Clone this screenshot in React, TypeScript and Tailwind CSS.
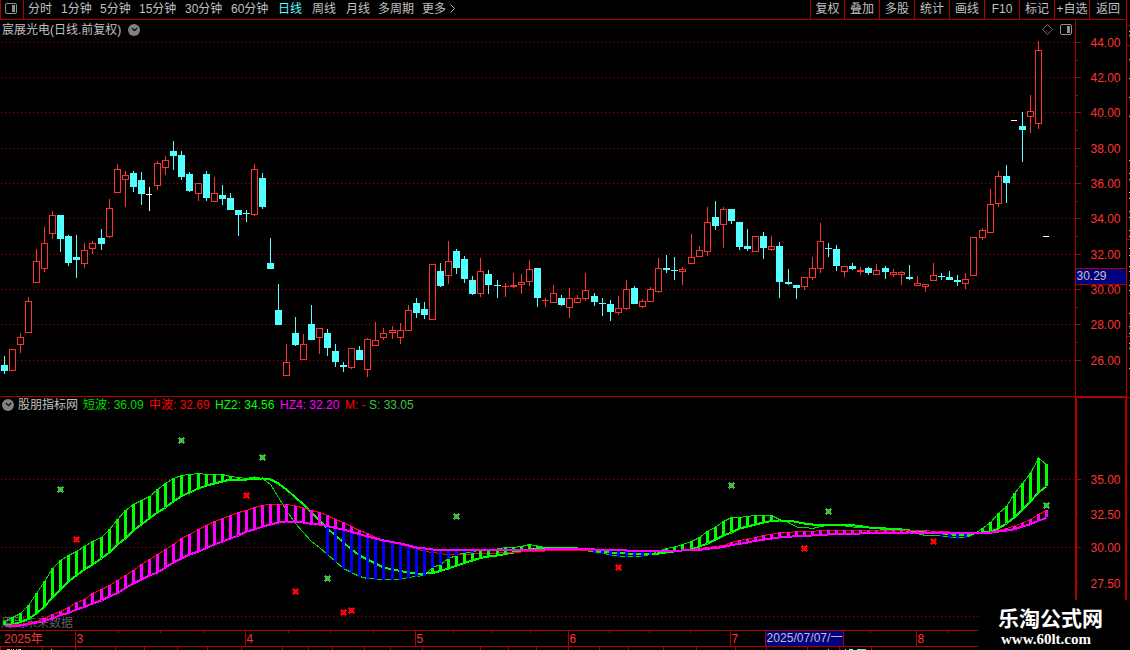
import { ChevronDown } from "lucide-react";

// x, high, body top, body bottom, low, kind (r = up, c = down, w = flat)
type Candle = [number, number, number, number, number, string];

const candles: Candle[] = [
  [4, 356, 365, 371, 374, "c"], [12, 349, 349, 371, 371, "r"], [20, 333, 337, 345, 353, "r"],
  [28, 297, 301, 333, 333, "r"], [36, 249, 261, 283, 283, "r"], [44, 227, 243, 269, 272, "r"],
  [52, 211, 215, 234, 239, "r"], [60, 215, 215, 239, 252, "c"], [68, 235, 236, 263, 266, "c"],
  [76, 235, 257, 260, 278, "c"], [84, 243, 250, 264, 268, "r"], [92, 241, 243, 249, 254, "r"],
  [101, 229, 238, 244, 250, "c"], [109, 199, 208, 237, 238, "r"], [117, 164, 169, 193, 193, "r"],
  [125, 171, 175, 180, 207, "r"], [133, 171, 173, 187, 192, "c"], [141, 172, 180, 194, 205, "c"],
  [149, 187, 194, 195, 211, "w"], [157, 161, 163, 186, 190, "r"], [165, 156, 160, 168, 175, "r"],
  [173, 141, 151, 156, 170, "c"], [181, 151, 155, 177, 180, "c"], [189, 172, 174, 191, 192, "c"],
  [198, 183, 183, 194, 201, "r"], [206, 171, 174, 198, 201, "c"], [214, 177, 193, 202, 202, "r"],
  [222, 185, 195, 199, 205, "c"], [230, 193, 198, 210, 210, "c"], [238, 210, 210, 215, 236, "c"],
  [246, 210, 213, 214, 222, "c"], [254, 164, 169, 215, 216, "r"], [262, 173, 178, 207, 209, "c"],
  [270, 238, 263, 269, 269, "c"], [278, 284, 310, 325, 325, "c"], [286, 344, 362, 376, 376, "r"],
  [295, 317, 333, 345, 346, "c"], [303, 334, 344, 360, 360, "r"], [311, 305, 324, 340, 340, "c"],
  [319, 328, 328, 338, 354, "r"], [327, 329, 333, 348, 356, "c"], [335, 344, 351, 362, 367, "c"],
  [343, 362, 365, 367, 372, "c"], [351, 348, 348, 368, 369, "r"], [359, 346, 350, 360, 360, "c"],
  [367, 338, 339, 370, 377, "r"], [375, 322, 340, 346, 346, "r"], [383, 328, 333, 338, 340, "r"],
  [392, 326, 330, 333, 339, "r"], [400, 323, 330, 338, 344, "r"], [408, 305, 310, 331, 331, "r"],
  [416, 298, 303, 313, 318, "c"], [424, 302, 309, 315, 319, "c"], [432, 264, 264, 320, 320, "r"],
  [440, 263, 271, 286, 287, "c"], [448, 241, 261, 276, 284, "r"], [456, 249, 251, 268, 274, "c"],
  [464, 256, 259, 279, 283, "c"], [472, 276, 280, 294, 295, "c"], [480, 258, 271, 294, 297, "r"],
  [488, 270, 274, 285, 294, "c"], [497, 280, 285, 286, 298, "c"], [505, 283, 286, 287, 297, "r"],
  [513, 273, 285, 287, 288, "r"], [521, 274, 282, 285, 294, "r"], [529, 260, 269, 282, 286, "r"],
  [537, 268, 268, 298, 307, "c"], [545, 298, 300, 301, 307, "r"], [553, 285, 293, 303, 303, "r"],
  [561, 295, 298, 305, 306, "c"], [569, 288, 298, 308, 318, "r"], [577, 295, 298, 303, 303, "r"],
  [585, 273, 290, 299, 301, "r"], [594, 293, 296, 302, 306, "c"], [602, 298, 303, 304, 316, "c"],
  [610, 300, 304, 312, 321, "c"], [618, 296, 308, 313, 315, "r"], [626, 280, 289, 309, 310, "r"],
  [634, 286, 288, 304, 304, "c"], [642, 299, 301, 307, 308, "r"], [650, 287, 289, 302, 302, "r"],
  [658, 258, 268, 292, 293, "r"], [666, 255, 268, 270, 273, "c"], [674, 257, 270, 271, 280, "c"],
  [682, 267, 269, 272, 285, "r"], [691, 234, 257, 264, 264, "r"], [699, 246, 250, 257, 257, "r"],
  [707, 207, 222, 252, 256, "r"], [715, 201, 217, 226, 230, "c"], [723, 207, 209, 225, 248, "r"],
  [731, 209, 209, 221, 224, "c"], [739, 222, 222, 247, 250, "c"], [747, 229, 246, 249, 251, "c"],
  [755, 236, 236, 252, 252, "r"], [763, 232, 236, 248, 259, "c"], [771, 236, 246, 250, 251, "r"],
  [779, 242, 246, 282, 298, "c"], [788, 269, 282, 284, 285, "c"], [796, 285, 285, 288, 299, "c"],
  [804, 277, 277, 287, 290, "r"], [812, 257, 268, 278, 280, "r"], [820, 223, 241, 269, 273, "r"],
  [828, 243, 248, 249, 257, "c"], [836, 245, 249, 266, 271, "c"], [844, 266, 266, 272, 277, "r"],
  [852, 263, 266, 269, 270, "c"], [860, 267, 270, 272, 275, "r"], [868, 267, 268, 273, 275, "c"],
  [876, 264, 270, 275, 275, "r"], [885, 266, 268, 272, 279, "c"], [893, 269, 272, 275, 277, "r"],
  [901, 271, 272, 275, 285, "r"], [909, 265, 277, 279, 280, "c"], [917, 276, 283, 286, 286, "r"],
  [925, 284, 284, 287, 292, "r"], [933, 263, 275, 281, 281, "r"], [941, 273, 276, 277, 280, "c"],
  [949, 271, 277, 280, 280, "c"], [957, 275, 280, 282, 286, "c"], [965, 273, 279, 284, 289, "r"],
  [973, 237, 237, 276, 276, "r"], [982, 228, 230, 238, 240, "r"], [990, 189, 204, 233, 233, "r"],
  [998, 171, 176, 204, 207, "r"], [1006, 165, 176, 183, 203, "c"], [1014, 120, 120, 121, 121, "w"],
  [1022, 112, 126, 130, 162, "c"], [1030, 95, 111, 117, 133, "r"], [1038, 41, 50, 124, 129, "r"],
  [1046, 236, 236, 237, 237, "w"],
];

type Point = [number, number];

const shortWave: Point[] = [
  [4, 621], [12, 617], [20, 613], [28, 605], [36, 593], [44, 581], [52, 568], [60, 560], [68, 555],
  [76, 551], [84, 546], [92, 541], [101, 537], [109, 529], [117, 519], [125, 510], [133, 504],
  [141, 500], [149, 496], [157, 489], [165, 483], [173, 478], [181, 475], [189, 474], [198, 473],
  [206, 474], [222, 474], [230, 476], [238, 477], [246, 478], [254, 476.5], [262, 478], [270, 484],
  [278, 497], [286, 510], [295, 523], [303, 532], [311, 541], [319, 547], [327, 554], [335, 561],
  [343, 568], [351, 572], [359, 576], [367, 578], [375, 578.5], [400, 578.5], [408, 577], [416, 576],
  [424, 575], [432, 567], [440, 564], [448, 558], [456, 555], [464, 552], [472, 551.5], [480, 549],
  [488, 548.5], [497, 548.5], [505, 547], [513, 547], [521, 546], [529, 544], [537, 545.5],
  [545, 547], [561, 547.5], [577, 548], [585, 550], [594, 551.5], [602, 552.5], [610, 554.5],
  [618, 555.5], [642, 555.5], [650, 554], [658, 550.5], [666, 548], [674, 546.5], [682, 544],
  [691, 541], [699, 537], [707, 531], [715, 526.5], [723, 521], [731, 517], [739, 517], [747, 516],
  [755, 515], [771, 515], [779, 519], [788, 522], [796, 526.5], [804, 527], [812, 528], [820, 526],
  [828, 525], [836, 525], [844, 525.5], [852, 526.5], [868, 527.5], [885, 529], [901, 530],
  [909, 531], [917, 533], [925, 535], [941, 535.5], [949, 536.5], [957, 537.5], [965, 537],
  [973, 534], [982, 528], [990, 522], [998, 513], [1006, 506], [1014, 493], [1022, 483],
  [1030, 473], [1038, 457.5], [1046, 464],
];

const hz2: Point[] = [
  [4, 625], [12, 624], [20, 621.5], [28, 618.5], [36, 613], [44, 606], [52, 597], [60, 589],
  [68, 581], [76, 575], [84, 569], [92, 564], [101, 558], [109, 552], [117, 544], [125, 538],
  [133, 530], [141, 524], [149, 518], [157, 512], [165, 507], [173, 501], [181, 495.5], [189, 492],
  [198, 488], [206, 485], [214, 483], [222, 481], [230, 479], [246, 479], [254, 478.5], [262, 478],
  [270, 479], [278, 483], [286, 489], [295, 497], [303, 504], [311, 512], [319, 520], [327, 528],
  [335, 535], [343, 542], [351, 549], [359, 555], [367, 559], [375, 563], [383, 567], [392, 569],
  [400, 570.5], [408, 572], [416, 573], [424, 573], [432, 572.5], [440, 570.5], [448, 568],
  [456, 565], [464, 562.5], [472, 560], [480, 557.5], [488, 556], [497, 555], [505, 553.5],
  [513, 552], [521, 550], [529, 549], [537, 548], [569, 547.5], [577, 548], [585, 549], [594, 550.5],
  [602, 551], [610, 552], [618, 552.5], [626, 553], [658, 553], [666, 552], [674, 551], [682, 550],
  [691, 549], [699, 546], [707, 543], [715, 539], [723, 535], [731, 532], [739, 528], [747, 526],
  [755, 524], [763, 522], [771, 520.5], [779, 520], [788, 520], [796, 521.5], [804, 523],
  [812, 524], [844, 524], [860, 525.5], [868, 527], [885, 528], [901, 529], [909, 530],
  [917, 531.5], [933, 532.4], [941, 533], [949, 533.7], [957, 534.7], [965, 535], [973, 533],
  [982, 532], [990, 531], [998, 528], [1006, 523], [1014, 517], [1022, 509], [1030, 501],
  [1038, 492], [1046, 486],
];

const midWave: Point[] = [
  [4, 625], [20, 624], [36, 621], [44, 618], [52, 614], [60, 611], [68, 607], [76, 602], [84, 599],
  [92, 593], [101, 589], [109, 585], [117, 580], [125, 575], [133, 570], [141, 564], [149, 559],
  [157, 554], [165, 549], [173, 544], [181, 538], [189, 534], [198, 529], [206, 525], [214, 521],
  [222, 518], [230, 515], [238, 512], [246, 510], [254, 507], [262, 505], [270, 503.5], [278, 503.5],
  [286, 504], [295, 505.5], [303, 507.5], [311, 510], [319, 512], [327, 515], [335, 519],
  [343, 522], [351, 526], [359, 530], [367, 533], [375, 537], [383, 540], [392, 542], [400, 544],
  [408, 546], [416, 548.5], [424, 551], [432, 552], [440, 553], [448, 554.4], [464, 554.4],
  [480, 552.7], [497, 552.5], [513, 552], [529, 551], [545, 550.5], [577, 550], [618, 550],
  [642, 551], [666, 551], [682, 549.7], [691, 549], [699, 548], [707, 547], [715, 546], [723, 545],
  [731, 542], [739, 540], [747, 538.5], [755, 537], [763, 535], [771, 533.7], [779, 532.3],
  [796, 531.3], [820, 530.3], [836, 529.5], [893, 529.5], [909, 529.7], [925, 530.3], [941, 531],
  [957, 532], [973, 532.3], [990, 531.5], [998, 530], [1006, 528], [1014, 525.5], [1022, 522.5],
  [1030, 519], [1038, 514], [1046, 510],
];

const hz4: Point[] = [
  [4, 625], [20, 625], [36, 622], [44, 620.5], [52, 618], [60, 614.5], [68, 612.5], [76, 609],
  [84, 606.5], [92, 603], [101, 600], [109, 596], [117, 592.5], [125, 587.5], [133, 583],
  [141, 579], [149, 575], [157, 572], [165, 567], [173, 562], [181, 558], [189, 554], [198, 551],
  [206, 547.5], [214, 544], [222, 541], [230, 538], [238, 535], [246, 531], [254, 529], [262, 526],
  [270, 524], [278, 522], [286, 521], [295, 521.3], [303, 522], [311, 523.5], [319, 524],
  [327, 525.5], [335, 527.5], [343, 529], [351, 531.5], [359, 533.5], [367, 536], [375, 538],
  [383, 540], [392, 541.5], [400, 543], [408, 545], [416, 547], [424, 548], [432, 549],
  [440, 549.7], [505, 549.7], [545, 549], [577, 548.7], [594, 549], [610, 549.7], [642, 550.3],
  [666, 550.5], [682, 550], [699, 549.3], [707, 548.3], [715, 547.5], [723, 546.5], [731, 544.5],
  [739, 543.5], [747, 542], [755, 540.3], [763, 539.3], [771, 538], [779, 537], [796, 535.7],
  [812, 535], [828, 534], [844, 533.3], [860, 533], [893, 532.7], [909, 532], [941, 532],
  [957, 533], [990, 532.3], [998, 531], [1006, 530], [1014, 528.7], [1022, 526], [1030, 523.7],
  [1038, 520.3], [1046, 517.3],
];

const buyMarks: Point[] = [[60, 489], [181, 440], [262, 457], [327, 578], [456, 516], [731, 485], [828, 511], [1046, 505]];
const sellMarks: Point[] = [[76, 539], [246, 495], [295, 591], [343, 612], [351, 610], [618, 567], [804, 548], [933, 541]];

const priceTicks: [string, number][] = [
  ["44.00", 42], ["42.00", 77], ["40.00", 112], ["38.00", 148], ["36.00", 183],
  ["34.00", 218], ["32.00", 254], ["30.00", 289], ["28.00", 324], ["26.00", 360],
];
const minorTicks = [60, 95, 130, 166, 201, 236, 271, 307, 342];

const periods = [
  { label: "分时", width: "w-[33px]" },
  { label: "1分钟", width: "w-[39px]" },
  { label: "5分钟", width: "w-[39px]" },
  { label: "15分钟", width: "w-[46px]" },
  { label: "30分钟", width: "w-[46px]" },
  { label: "60分钟", width: "w-[47px]" },
  { label: "日线", width: "w-[34px]", active: true },
  { label: "周线", width: "w-[34px]" },
  { label: "月线", width: "w-[32px]" },
  { label: "多周期", width: "w-[44px]" },
  { label: "更多", width: "w-[26px]" },
];

const actions = [
  { label: "复权", width: "w-[34px]" },
  { label: "叠加", width: "w-[35px]" },
  { label: "多股", width: "w-[35px]" },
  { label: "统计", width: "w-[35px]" },
  { label: "画线", width: "w-[35px]" },
  { label: "F10", width: "w-[35px]" },
  { label: "标记", width: "w-[35px]" },
  { label: "+自选", width: "w-[35px]" },
  { label: "返回", width: "w-[37px]" },
];

const months: [string, number][] = [["3", 75], ["4", 245], ["5", 415], ["6", 568], ["7", 730], ["8", 916]];
const weekTicks = [118, 160, 203, 288, 330, 373, 453, 492, 530, 609, 649, 690, 870, 948];
const tabTicks = [0, 42, 75, 115, 144, 177, 207, 241, 282, 308, 332, 364, 390, 422, 480, 508, 536, 568, 599, 628, 663, 696, 735, 766, 807, 839, 871];
const stripDots = [31, 35, 59, 78, 97, 116, 160, 173, 179, 192, 198, 211, 217, 230, 236, 248, 255, 266, 271, 285, 290, 313, 326, 333, 343, 348, 368];

const RED = "#b00000";

const valueAt = (line: Point[], x: number) => {
  const i = line.findIndex((p) => p[0] >= x);
  if (i <= 0) return line[0][1];
  const [x0, y0] = line[i - 1];
  const [x1, y1] = line[i];
  return y0 + ((y1 - y0) * (x - x0)) / (x1 - x0);
};

const toPoints = (line: Point[]) => line.map(([x, y]) => `${x + 0.5},${y + 0.5}`).join(" ");

const GridLine = ({ y, end = 1075 }: { y: number; end?: number }) => (
  <line x1="1" x2={end} y1={y + 0.5} y2={y + 0.5} stroke="#b00000" strokeDasharray="1 3" />
);

const CandleShape = ({ candle }: { candle: Candle }) => {
  const [x, high, top, bottom, low, kind] = candle;
  if (kind === "r") {
    return (
      <g fill="#ff3232">
        <rect x={x} y={high} width="1" height={top - high} />
        <rect x={x} y={bottom} width="1" height={low - bottom} />
        {bottom - top < 3 ? (
          <rect x={x - 3} y={top} width="7" height={bottom - top} />
        ) : (
          <rect x={x - 2.5} y={top + 0.5} width="6" height={bottom - top - 1} fill="black" stroke="#ff3232" />
        )}
      </g>
    );
  }
  return (
    <g fill={kind === "c" ? "#54ffff" : "#ffffff"}>
      <rect x={x} y={high} width="1" height={low - high} />
      <rect x={x - 3} y={top} width={kind === "c" ? 7 : 6} height={bottom - top} />
    </g>
  );
};

const Mark = ({ at, color }: { at: Point; color: string }) => (
  <path
    transform={`translate(${at[0] - 3} ${at[1] - 3})`}
    fill={color}
    d="M1 0h1v1h3V0h1v1h1v1H6v3h1v1H6v1H5V6H2v1H1V6H0V5h1V2H0V1h1z"
  />
);

const RoundChevron = () => (
  <span className="flex h-3 w-3 items-center justify-center rounded-full bg-[#808080]">
    <ChevronDown size={9} strokeWidth={3.5} color="black" />
  </span>
);

const PanelIcon = () => (
  <svg width="12" height="11" viewBox="0 0 12 11" className="shrink-0">
    <rect x="0.5" y="0.5" width="11" height="10" rx="1.5" fill="none" stroke="#909090" />
    <rect x="7" y="2" width="3" height="7" fill="#909090" />
  </svg>
);

const PriceChart = () => (
  <svg
    width="1126"
    height="357"
    viewBox="0 39 1126 357"
    shapeRendering="crispEdges"
    fontSize="12"
    className="block overflow-visible"
  >
    {priceTicks.map(([label, y]) => (
      <g key={label}>
        <GridLine y={y} />
        <rect x="1076" y={y} width="5" height="1" fill={RED} />
        <text x="1090.5" y={y + 5} fill="#ff3232">{label}</text>
      </g>
    ))}
    {minorTicks.map((y) => (
      <rect key={y} x="1076" y={y} width="2" height="1" fill={RED} />
    ))}
    <rect x="1075" y="39" width="1" height="357" fill={RED} />
    {candles.map((c) => (
      <CandleShape key={c[0]} candle={c} />
    ))}
    {/* Cursor price */}
    <rect x="1076" y="268" width="50" height="17" fill={RED} />
    <rect x="1076" y="269" width="50" height="15" fill="#000080" />
    <text x="1076.5" y="280" fill="#c0c0c0">30.29</text>
  </svg>
);

const IndicatorChart = () => (
  <svg
    width="1127"
    height="216"
    viewBox="0 414 1127 216"
    shapeRendering="crispEdges"
    fontSize="12"
    className="block"
  >
    <GridLine y={479} />
    <GridLine y={547} />
    <GridLine y={616} end={978} />
    <text x="1" y="627" fill="#606060">用到未来数据</text>
    <rect x="1075" y="414" width="2" height="186" fill={RED} />
    <rect x="1125" y="414" width="2" height="186" fill={RED} />
    {[479, 547].map((y) => (
      <rect key={y} x="1077" y={y} width="4" height="1" fill={RED} />
    ))}
    {[513, 582].map((y) => (
      <rect key={y} x="1077" y={y} width="1" height="1" fill={RED} />
    ))}
    <g fill="#ff3232">
      <text x="1090.5" y="484">35.00</text>
      <text x="1090.5" y="519">32.50</text>
      <text x="1090.5" y="552">30.00</text>
      <text x="1090.5" y="588">27.50</text>
    </g>
    <polyline points={toPoints(shortWave)} fill="none" stroke="#00e000" />
    <polyline points={toPoints(hz2)} fill="none" stroke="#00ff00" strokeWidth="2" />
    <polyline points={toPoints(midWave)} fill="none" stroke="#ff0000" />
    {candles.map(([x]) => {
      const s = valueAt(shortWave, x);
      const h2 = valueAt(hz2, x);
      const m = valueAt(midWave, x);
      const h4 = valueAt(hz4, x);
      return (
        <g key={x}>
          {s < h2 - 0.5 && <rect x={x - 1} y={s} width="3" height={h2 - s} fill="#00ff00" />}
          {m < h4 - 0.5 && <rect x={x - 1} y={m} width="3" height={h4 - m} fill="#ff00ff" />}
          {h2 > h4 + 0.5 && s > h4 + 0.5 && (
            <rect x={x - 1} y={h4} width="3" height={s - h4 + 1} fill="#0000ff" />
          )}
        </g>
      );
    })}
    <polyline points={toPoints(hz4)} fill="none" stroke="#ff00ff" strokeWidth="2" />
    {buyMarks.map((p) => (
      <Mark key={p[0]} at={p} color="#40c040" />
    ))}
    {sellMarks.map((p) => (
      <Mark key={p[0]} at={p} color="#ff0000" />
    ))}
  </svg>
);

const TimeAxis = () => (
  <svg
    width="978"
    height="20"
    viewBox="0 630 978 20"
    shapeRendering="crispEdges"
    fontSize="12"
    className="block"
  >
    <g fill={RED}>
      <rect x="0" y="630" width="978" height="1" />
      <rect x="0" y="646" width="978" height="1" />
      {months.map(([label, x]) => (
        <rect key={label} x={x} y="630" width="1" height="16" />
      ))}
      {weekTicks.map((x) => (
        <rect key={x} x={x} y="631" width="1" height="2" />
      ))}
      {tabTicks.map((x) => (
        <rect key={x} x={x} y="647" width="1" height="3" />
      ))}
      <rect x="765" y="630" width="79" height="17" />
    </g>
    <rect x="766" y="631" width="77" height="15" fill="#000080" />
    <g fill="#ff3232">
      <text x="4" y="643">2025年</text>
      {months.map(([label, x]) => (
        <text key={label} x={x + 1.5} y="643">{label}</text>
      ))}
    </g>
    <text x="766.5" y="642" fill="#c0c0c0" textLength="76">2025/07/07/一</text>
    {/* Tops of the status row */}
    <path d="M7 649.5h3M11 649.5h1M13 649.5h1M16 649.5h1M18 649.5h3M51 649.5h1M828 649.5h1" stroke="#c0c0c0" />
    <path d="M845 649.5h1M849 649.5h4M857 649.5h9" stroke="#54ffff" />
  </svg>
);

export default function App() {
  return (
    <div className="relative flex h-[650px] w-[1130px] overflow-hidden bg-black font-['Liberation_Sans','Noto_Sans_CJK_SC',sans-serif] text-[12px] text-[#c0c0c0]">
      <div className="flex w-[1127px] flex-col">
        {/* Toolbar */}
        <div className="flex h-5 border-r border-b border-l border-[#b00000] leading-[19px]">
          <div className="flex w-[23px] items-center border-r border-[#b00000] pb-[2px] pl-1">
            <PanelIcon />
          </div>
          <div className="flex flex-1 pl-1">
            {periods.map((p) => (
              <span key={p.label} className={`${p.width} whitespace-nowrap ${p.active ? "text-[#54ffff]" : ""}`}>
                {p.label}
              </span>
            ))}
            <svg width="8" height="18" viewBox="0 0 8 18" fill="none" stroke="#c0c0c0">
              <path d="M2.5 4.5l4 4-4 4" />
            </svg>
          </div>
          {actions.map((a) => (
            <span key={a.label} className={`${a.width} h-[19px] shrink-0 border-l border-[#b00000] text-center whitespace-nowrap`}>
              {a.label}
            </span>
          ))}
        </div>

        {/* Price pane */}
        <div className="border-r border-[#b00000]">
          <div className="flex h-[19px]">
            <div className="flex flex-1 items-center gap-[7px] pl-[2px]">
              <span>宸展光电(日线.前复权)</span>
              <RoundChevron />
            </div>
            <div className="flex items-center gap-[7px] pr-[3px]">
              <svg width="11" height="11" viewBox="0 0 11 11">
                <path d="M5.5 0.5l5 5-5 5-5-5z" fill="none" stroke="#707070" />
              </svg>
              <PanelIcon />
            </div>
            <div className="w-[51px] border-l border-[#b00000]" />
          </div>
          <PriceChart />
        </div>

        {/* Indicator pane */}
        <div>
          <div className="flex h-[18px] border-t border-[#b00000]">
            <div className="flex flex-1 items-center pb-[2px] pl-[2px] whitespace-nowrap">
              <RoundChevron />
              <span className="ml-[4px] w-[65px]">股朋指标网</span>
              <span className="w-[66px] text-[#00d800]">短波: 36.09</span>
              <span className="w-[66px] text-[#ff0000]">中波: 32.69</span>
              <span className="w-[65px] text-[#00ff00]">HZ2: 34.56</span>
              <span className="w-[65px] text-[#ff00ff]">HZ4: 32.20</span>
              <span className="w-[24px] text-[#ff0000]">M: -</span>
              <span className="text-[#40c040]">S: 33.05</span>
            </div>
            <div className="w-[52px] border-x-2 border-t border-[#b00000]" />
          </div>
          <IndicatorChart />
        </div>

        <TimeAxis />
      </div>

      {/* Neighbouring panel edge */}
      <svg width="3" height="650" viewBox="0 0 3 650" shapeRendering="crispEdges">
        {[25, 45, 239, 336, 397].map((y) => (
          <rect key={y} x="0" y={y} width="3" height="1" fill={RED} />
        ))}
        {stripDots.map((y) => (
          <rect key={y} x="2" y={y} width="1" height="1" fill="#c0c0c0" />
        ))}
      </svg>

      {/* Site badge */}
      <div className="absolute right-0 bottom-0 flex h-[50px] w-[152px] flex-col bg-black pl-5 font-bold whitespace-nowrap text-white">
        <span className="mt-[4px] font-['Noto_Sans_CJK_SC',sans-serif] text-[21px] leading-[27px]">乐淘公式网</span>
        <span className="pl-[3px] pt-px font-['Liberation_Serif',serif] text-[15px] leading-[14px]">www.60lt.com</span>
      </div>
    </div>
  );
}
